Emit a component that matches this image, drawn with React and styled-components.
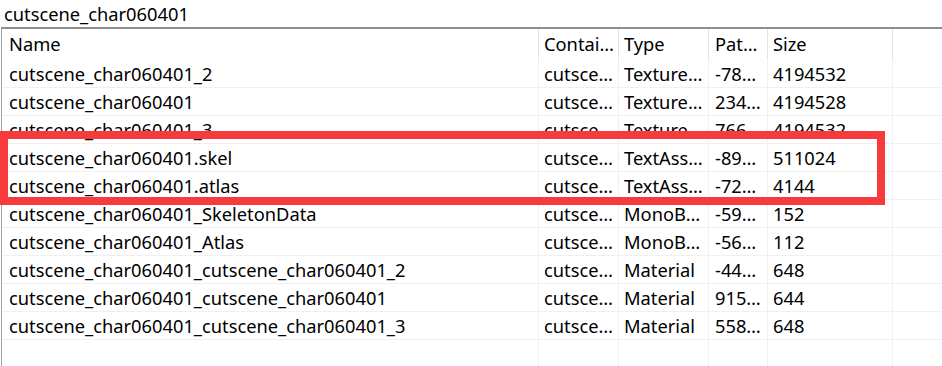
import React from "react";
import styled, { createGlobalStyle } from "styled-components";

const GlobalStyle = createGlobalStyle`
  html, body { margin: 0; padding: 0; background: #ffffff; }
  body { font-family: "Noto Sans", "Noto Sans CJK SC", sans-serif; color: #000; }
`;

const COLS = [
  { key: "name", width: 537, pad: 7 },
  { key: "container", width: 80, pad: 5 },
  { key: "type", width: 90, pad: 5 },
  { key: "path", width: 59, pad: 6 },
  { key: "size", width: 125, pad: 5 },
];

const HEADERS = ["Name", "Contai…", "Type", "Pat…", "Size"];

const ROWS = [
  ["cutscene_char060401_2", "cutsce…", "Texture…", "-78…", "4194532"],
  ["cutscene_char060401", "cutsce…", "Texture…", "234…", "4194528"],
  ["cutscene_char060401_3", "cutsce…", "Texture…", "766…", "4194532"],
  ["cutscene_char060401.skel", "cutsce…", "TextAss…", "-89…", "511024"],
  ["cutscene_char060401.atlas", "cutsce…", "TextAss…", "-72…", "4144"],
  ["cutscene_char060401_SkeletonData", "cutsce…", "MonoB…", "-59…", "152"],
  ["cutscene_char060401_Atlas", "cutsce…", "MonoB…", "-56…", "112"],
  ["cutscene_char060401_cutscene_char060401_2", "cutsce…", "Material", "-44…", "648"],
  ["cutscene_char060401_cutscene_char060401", "cutsce…", "Material", "915…", "644"],
  ["cutscene_char060401_cutscene_char060401_3", "cutsce…", "Material", "558…", "648"],
];

const Page = styled.div`
  position: relative;
  width: 942px;
  height: 366px;
  overflow: hidden;
  background: #fff;
  display: flex;
  flex-direction: column;
  font-size: 18.3px;
`;

const TitleBar = styled.div`
  height: 27px;
  line-height: 27px;
  padding-left: 4px;
  white-space: nowrap;
`;

const ListView = styled.div`
  flex: 1;
  margin-left: 1px;
  border-top: 2px solid #8e8e8e;
  border-left: 1px solid #a3a3a3;
  display: flex;
  flex-direction: column;
  min-height: 0;
`;

const HeaderRow = styled.div`
  display: flex;
  height: 31px;
  flex: none;
`;

const HeaderCell = styled.div`
  box-sizing: border-box;
  width: ${(p) => p.$w}px;
  flex: none;
  padding-left: ${(p) => p.$pad}px;
  border-right: 1px solid #e3e3e3;
  line-height: 29px;
  white-space: nowrap;
  overflow: hidden;
  margin-bottom: 1px;
`;

const Row = styled.div`
  display: flex;
  height: 28px;
  flex: none;
  box-sizing: border-box;
  border-bottom: 1px solid #f0f0f0;
`;

const Cell = styled.div`
  box-sizing: border-box;
  width: ${(p) => p.$w}px;
  flex: none;
  padding-left: ${(p) => p.$pad}px;
  border-right: 1px solid #f0f0f0;
  line-height: 27px;
  white-space: nowrap;
  overflow: hidden;
`;

const FillerCell = styled.div`
  flex: 1;
`;

const EmptyArea = styled.div`
  flex: 1;
  display: flex;
`;

const EmptyCell = styled.div`
  box-sizing: border-box;
  width: ${(p) => p.$w}px;
  flex: none;
  border-right: 1px solid #f0f0f0;
`;

const Highlight = styled.div`
  position: absolute;
  left: 0;
  top: 131px;
  width: 885px;
  height: 74px;
  box-sizing: border-box;
  border: 8px solid #f53b3b;
  pointer-events: none;
`;

export default function App() {
  return (
    <>
      <GlobalStyle />
      <Page>
        <TitleBar>cutscene_char060401</TitleBar>
        <ListView>
          <HeaderRow>
            {HEADERS.map((h, i) => (
              <HeaderCell key={h} $w={COLS[i].width} $pad={COLS[i].pad}>
                {h}
              </HeaderCell>
            ))}
            <FillerCell />
          </HeaderRow>
          {ROWS.map((r, ri) => (
            <Row key={ri}>
              {r.map((v, ci) => (
                <Cell key={ci} $w={COLS[ci].width} $pad={COLS[ci].pad}>
                  {v}
                </Cell>
              ))}
              <FillerCell />
            </Row>
          ))}
          <EmptyArea>
            {COLS.map((c) => (
              <EmptyCell key={c.key} $w={c.width} />
            ))}
          </EmptyArea>
        </ListView>
        <Highlight />
      </Page>
    </>
  );
}
